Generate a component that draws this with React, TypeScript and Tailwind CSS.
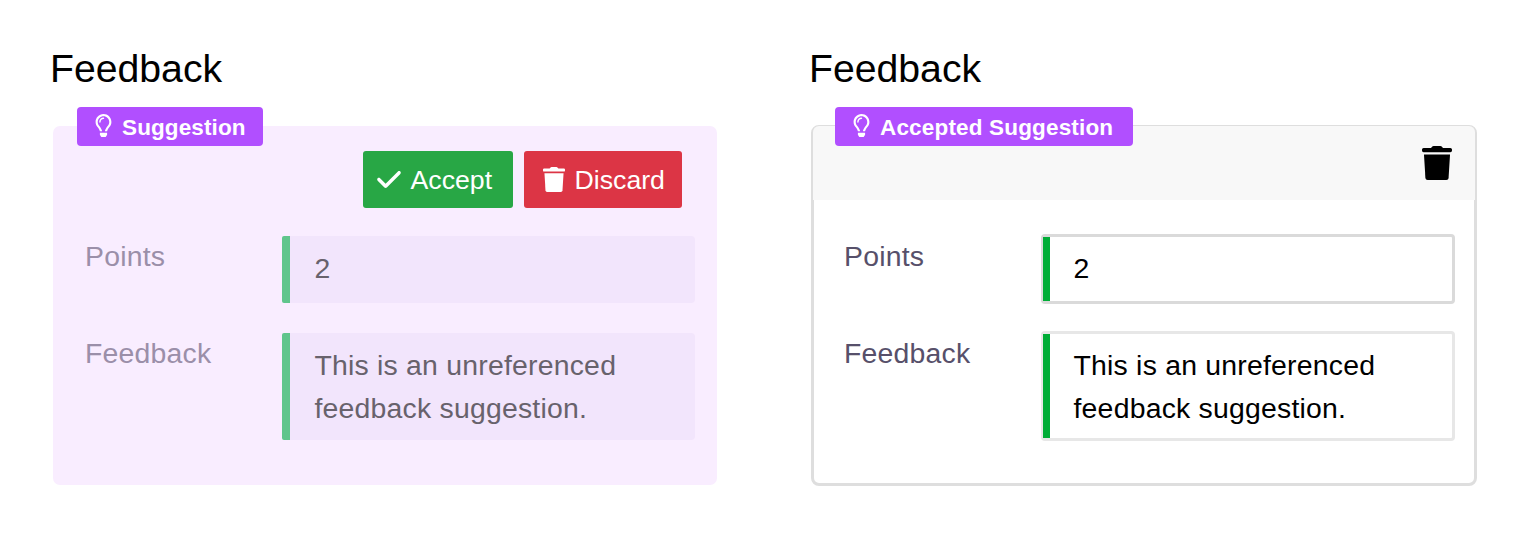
import { FaCheck } from "react-icons/fa6";
import { FaRegLightbulb } from "react-icons/fa";
import clsx from "clsx";

function TrashIcon({ className }: { className?: string }) {
  return (
    <svg viewBox="0 0 30 34" fill="currentColor" className={className} aria-hidden="true">
      <path d="M1.6 1.9H9L10.3.6Q10.8 0 11.6 0H18.4Q19.2 0 19.7.6L21 1.9H28.4Q30 1.9 30 3.5V4.6Q30 6.2 28.4 6.2H1.6Q0 6.2 0 4.6V3.5Q0 1.9 1.6 1.9Z" />
      <path d="M2 8.4H28L26.6 32Q26.4 34 24.4 34H5.6Q3.6 34 3.4 32Z" />
    </svg>
  );
}

function Badge({ label, className }: { label: string; className: string }) {
  return (
    <div
      className={clsx(
        "absolute -top-[19px] left-6 flex h-[39px] items-center rounded-[4px] bg-[#b14fff] pl-[18px] text-[22.5px] font-bold leading-none text-white",
        className,
      )}
    >
      <FaRegLightbulb className="-mt-[3px] mr-[10px] h-[23px] w-[17px] shrink-0" />
      <span className="mt-[3px] whitespace-nowrap">{label}</span>
    </div>
  );
}

function Field({ label, value, muted, strong }: { label: string; value: string; muted: boolean; strong?: boolean }) {
  return (
    <div className="flex items-start">
      <div
        className={clsx(
          "-mt-px w-[197px] shrink-0 leading-[42.5px]",
          muted ? "text-[#9b8fa9]" : "text-[#57506a]",
        )}
      >
        {label}
      </div>
      <div
        className={clsx(
          "flex flex-1 rounded-[4px]",
          strong ? (muted ? "h-[67px]" : "h-[70px]") : muted ? "h-[107px]" : "h-[110px]",
          muted && "ml-[0.4px] bg-[#f2e5fc] text-[#68626c]",
          !muted && "-mt-[2px] -mb-px -mr-[1.5px] -ml-[0.5px] border-[3px] border-l-2 bg-white text-black",
          !muted && (strong ? "border-[#dadada]" : "border-[#e7e7e7]"),
        )}
      >
        <div className={clsx("shrink-0", muted ? "w-2 rounded-l-[2px] bg-[#60c58c]" : "w-[7px] bg-[#00ad37]")} />
        <div className={clsx("pl-6 leading-[42.5px]", muted ? "pt-[11px]" : "pt-[10px]")}>{value}</div>
      </div>
    </div>
  );
}

function Fields({ muted }: { muted: boolean }) {
  return (
    <div className="flex flex-col gap-[30px] text-[28.4px] tracking-[0.22px]">
      <Field label="Points" value="2" muted={muted} strong />
      <Field label="Feedback" value="This is an unreferenced feedback suggestion." muted={muted} />
    </div>
  );
}

function Heading() {
  return <h2 className="h-[81px] text-[39.2px] leading-[48px] text-black">Feedback</h2>;
}

export default function App() {
  return (
    <main className="flex h-[534px] w-[1536px] bg-white pt-[45px] font-['Liberation_Sans',Arial,sans-serif]">
      <section className="w-[759px] shrink-0 pl-[50px]">
        <Heading />
        <div className="relative ml-[3px] h-[359px] w-[664px] rounded-[7px] bg-[#f9edff] pl-8 pr-[22.5px] pt-[25px]">
          <Badge label="Suggestion" className="w-[186px] tracking-[0.12px]" />
          <div className="mb-[28px] flex justify-end gap-[11px] pr-[13px] text-[26.7px] leading-none text-white">
            <button className="flex h-[57px] w-[150px] items-center rounded-[3px] bg-[#28a745] pl-[14px]">
              <FaCheck className="mr-[10px] h-[27px] w-[24px]" />
              <span className="mt-px">Accept</span>
            </button>
            <button className="flex h-[57px] w-[158px] items-center rounded-[3px] bg-[#dc3545] pl-[19px]">
              <TrashIcon className="mr-[10px] h-[25px] w-[22px]" />
              <span className="mt-px">Discard</span>
            </button>
          </div>
          <Fields muted />
        </div>
      </section>
      <section className="shrink-0 pl-[50px]">
        <Heading />
        <div className="relative -mt-px ml-[1.5px] h-[361px] w-[666px] rounded-[8px] border-[3px] border-[#dedede] bg-white">
          <div className="-mx-px -mt-[2px] flex h-[74px] justify-end rounded-t-[6px] bg-[#f8f8f8] pr-[23px] pt-[20px]">
            <TrashIcon className="h-[34px] w-[30px] text-black" />
          </div>
          <div className="pl-[30.5px] pr-[20px] pt-[36px]">
            <Fields muted={false} />
          </div>
          <div className="absolute left-[-2.5px] top-[-2px]">
            <Badge label="Accepted Suggestion" className="w-[298px] tracking-[0.17px]" />
          </div>
        </div>
      </section>
    </main>
  );
}
